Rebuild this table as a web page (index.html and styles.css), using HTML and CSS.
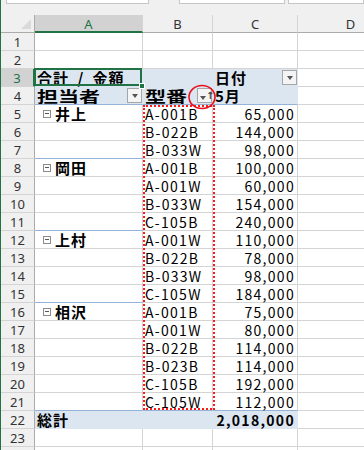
FILE: index.html
```html
<!DOCTYPE html>
<html lang="ja">
<head>
<meta charset="utf-8">
<link rel="stylesheet" href="styles.css">
</head>
<body>
<div class="app">
  <div class="topbar">
    <div class="box namebox"></div>
    <div class="box fx1"></div>
    <div class="box fx2"></div>
  </div>
  <div class="sheet">
    <div class="corner"><span class="tri"></span></div>
    <div class="ch sel">A</div>
    <div class="ch">B</div>
    <div class="ch">C</div>
    <div class="ch">D</div>

    <div class="rh">1</div><div class="c"></div><div class="c"></div><div class="c"></div><div class="c"></div>
    <div class="rh">2</div><div class="c"></div><div class="c"></div><div class="c"></div><div class="c"></div>

    <div class="rh rsel">3</div>
    <div class="c pv b selcell"><span class="jp title">合計 / 金額</span><span class="handle"></span></div>
    <div class="c pv"></div>
    <div class="c pv b"><span class="jp">日付</span><span class="dd"><span class="arr"></span></span></div>
    <div class="c"></div>

    <div class="rh">4</div>
    <div class="c pv b bl"><span class="jp wide">担当者</span><span class="dd"><span class="arr"></span></span></div>
    <div class="c pv b bl"><span class="jp wide">型番</span><span class="dd sort"><span class="arr"></span><span class="up">↑</span></span></div>
    <div class="c pv b bl"><span class="jp">5月</span></div>
    <div class="c"></div>

    <div class="rh">5</div><div class="c b"><span class="grp"></span><span class="jp">井上</span></div><div class="c">A-001B</div><div class="c r">65,000</div><div class="c"></div>
    <div class="rh">6</div><div class="c"></div><div class="c">B-022B</div><div class="c r">144,000</div><div class="c"></div>
    <div class="rh">7</div><div class="c gl"></div><div class="c">B-033W</div><div class="c r">98,000</div><div class="c"></div>
    <div class="rh">8</div><div class="c b"><span class="grp"></span><span class="jp">岡田</span></div><div class="c">A-001B</div><div class="c r">100,000</div><div class="c"></div>
    <div class="rh">9</div><div class="c"></div><div class="c">A-001W</div><div class="c r">60,000</div><div class="c"></div>
    <div class="rh">10</div><div class="c"></div><div class="c">B-033W</div><div class="c r">154,000</div><div class="c"></div>
    <div class="rh">11</div><div class="c gl"></div><div class="c">C-105B</div><div class="c r">240,000</div><div class="c"></div>
    <div class="rh">12</div><div class="c b"><span class="grp"></span><span class="jp">上村</span></div><div class="c">A-001W</div><div class="c r">110,000</div><div class="c"></div>
    <div class="rh">13</div><div class="c"></div><div class="c">B-022B</div><div class="c r">78,000</div><div class="c"></div>
    <div class="rh">14</div><div class="c"></div><div class="c">B-033W</div><div class="c r">98,000</div><div class="c"></div>
    <div class="rh">15</div><div class="c gl"></div><div class="c">C-105W</div><div class="c r">184,000</div><div class="c"></div>
    <div class="rh">16</div><div class="c b"><span class="grp"></span><span class="jp">相沢</span></div><div class="c">A-001B</div><div class="c r">75,000</div><div class="c"></div>
    <div class="rh">17</div><div class="c"></div><div class="c">A-001W</div><div class="c r">80,000</div><div class="c"></div>
    <div class="rh">18</div><div class="c"></div><div class="c">B-022B</div><div class="c r">114,000</div><div class="c"></div>
    <div class="rh">19</div><div class="c"></div><div class="c">B-023B</div><div class="c r">114,000</div><div class="c"></div>
    <div class="rh">20</div><div class="c"></div><div class="c">C-105B</div><div class="c r">192,000</div><div class="c"></div>
    <div class="rh">21</div><div class="c gl"></div><div class="c gl">C-105W</div><div class="c r gl">112,000</div><div class="c"></div>

    <div class="rh">22</div>
    <div class="c pv b"><span class="jp">総計</span></div>
    <div class="c pv"></div>
    <div class="c pv b r">2,018,000</div>
    <div class="c"></div>

    <div class="rh">23</div><div class="c"></div><div class="c"></div><div class="c"></div><div class="c"></div>
    <div class="rh">24</div><div class="c"></div><div class="c"></div><div class="c"></div><div class="c"></div>

    <div class="marquee"></div>
    <svg class="circle" width="30" height="28" viewBox="0 0 30 28"><ellipse cx="15" cy="14" rx="13" ry="11.5" fill="none" stroke="#e8101a" stroke-width="1.6"/></svg>
  </div>
</div>
</body>
</html>
```

FILE: styles.css
```css
html, body {
  margin: 0;
  padding: 0;
  background: #ffffff;
  overflow: hidden;
}

.app {
  width: 363px;
  height: 450px;
  border-left: 1px solid #217346;
  overflow: hidden;
  background: #ffffff;
}

.topbar {
  height: 15px;
  background: #f0f0f0;
  display: flex;
  align-items: flex-start;
}

.box {
  height: 4px;
  box-sizing: border-box;
  background: #ffffff;
  border: 1px solid #c6c6c6;
  border-top: none;
}

.namebox {
  margin-left: 5px;
  width: 151px;
}

.fx1 {
  margin-left: 30px;
  width: 111px;
}

.fx2 {
  margin-left: 3px;
  width: 80px;
}

.sheet {
  position: relative;
  display: grid;
  grid-template-columns: 34px 108px 70px 85px 106px;
  grid-auto-rows: 18px;
  width: 403px;
}

.corner {
  position: relative;
  background: #f0f0f0;
  border-right: 1px solid #ababab;
  border-bottom: 1px solid #ababab;
  box-sizing: border-box;
}

.tri {
  position: absolute;
  right: 3px;
  bottom: 3px;
  width: 0;
  height: 0;
  border-left: 10px solid transparent;
  border-bottom: 10px solid #dadada;
}

.ch {
  background: #f0f0f0;
  border-right: 1px solid #d4d4d4;
  border-bottom: 1px solid #ababab;
  box-sizing: border-box;
  display: flex;
  align-items: center;
  justify-content: center;
  font: 13px "Noto Sans", "DejaVu Sans", sans-serif;
  color: #333333;
  padding-top: 1px;
}

.ch.sel {
  background: #d2d2d2;
  border-bottom: 2px solid #217346;
  color: #217346;
}

.rh {
  background: #f0f0f0;
  border-right: 1px solid #ababab;
  border-bottom: 1px solid #d4d4d4;
  box-sizing: border-box;
  display: flex;
  align-items: center;
  justify-content: center;
  font: 13px "Noto Sans", "DejaVu Sans", sans-serif;
  color: #333333;
  padding-top: 1px;
}

.rh.rsel {
  background: #d2d2d2;
  color: #217346;
  border-right: 2px solid #217346;
}

.c {
  position: relative;
  border-right: 1px solid #d4d4d4;
  border-bottom: 1px solid #d4d4d4;
  box-sizing: border-box;
  display: flex;
  align-items: center;
  white-space: nowrap;
  padding: 0 3px 0 2px;
  font: 14px/16px "Noto Sans CJK JP", sans-serif;
  letter-spacing: 1.3px;
  color: #000000;
}

.c.r {
  justify-content: flex-end;
  padding-right: 2px;
}

.c.b {
  font-weight: bold;
}

.jp {
  font-size: 15px;
  letter-spacing: 1px;
}

.jp.title {
  word-spacing: 4px;
}

.jp.wide {
  letter-spacing: 0;
  transform: scaleX(1.4);
  transform-origin: left center;
}

.pv {
  background: #dce6f1;
  border-right-color: #dce6f1;
  border-bottom-color: #dce6f1;
}

.pv.bl,
.c.gl {
  border-bottom-color: #95b3d7;
}

.grp {
  width: 8px;
  height: 8px;
  box-sizing: border-box;
  border: 1px solid #8c8c8c;
  background: #ffffff;
  margin: 0 4px 0 6px;
  position: relative;
  flex: none;
}

.grp::after {
  content: "";
  position: absolute;
  left: 1px;
  right: 1px;
  top: 2px;
  height: 1px;
  background: #555555;
}

.dd {
  position: absolute;
  right: 0;
  top: 1px;
  width: 15px;
  height: 15px;
  box-sizing: border-box;
  border: 1px solid #a6a6a6;
  background: #f4f4f4;
  display: flex;
  align-items: center;
  justify-content: center;
}

.arr {
  width: 0;
  height: 0;
  border-left: 3.5px solid transparent;
  border-right: 3.5px solid transparent;
  border-top: 4px solid #555555;
}

.dd.sort {
  justify-content: flex-start;
  padding-left: 2px;
}

.dd.sort .arr {
  margin-top: 4px;
}

.up {
  font: bold 10px/10px "DejaVu Sans", sans-serif;
  letter-spacing: 0;
  color: #444444;
}

.selcell::after {
  content: "";
  position: absolute;
  left: -1px;
  top: -1px;
  right: 0;
  bottom: 0;
  border: 2px solid #217346;
}

.handle {
  position: absolute;
  right: -3px;
  bottom: -3px;
  width: 6px;
  height: 6px;
  background: #217346;
  border: 1px solid #ffffff;
  box-sizing: border-box;
  z-index: 2;
}

.marquee {
  position: absolute;
  left: 142px;
  top: 90px;
  width: 72px;
  height: 305px;
  box-sizing: border-box;
  border: 2px dotted #ff1a1a;
  pointer-events: none;
}

.circle {
  position: absolute;
  left: 186px;
  top: 68px;
}
```
